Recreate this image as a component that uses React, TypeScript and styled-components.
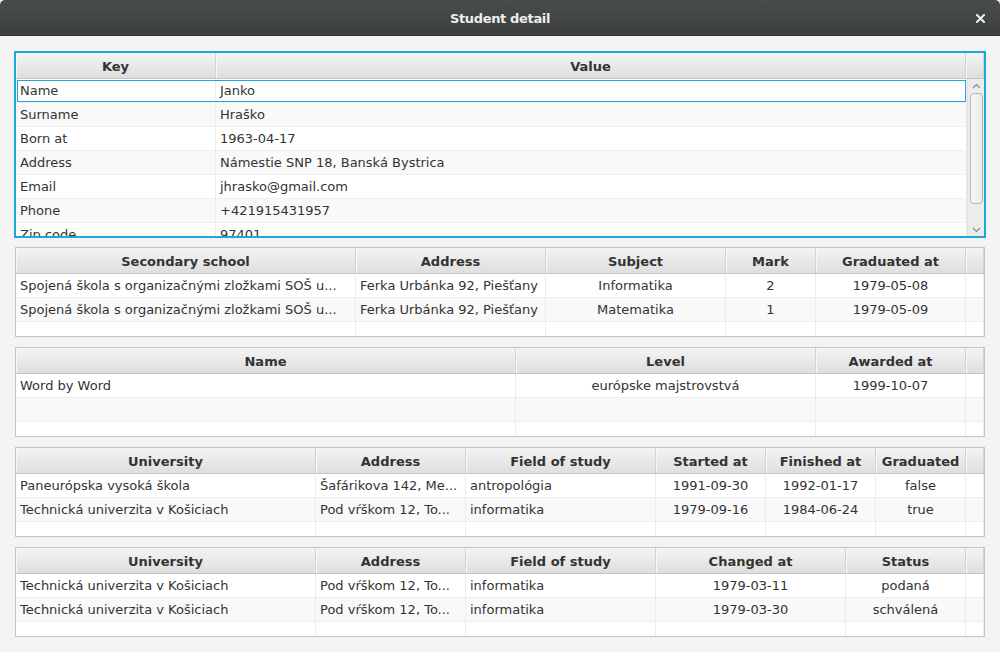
import React from 'react';
import styled, { createGlobalStyle, css } from 'styled-components';

const Global = createGlobalStyle`
  *, *::before, *::after { box-sizing: border-box; }
  html, body { margin: 0; padding: 0; background: #ffffff; }
  body { font-family: "DejaVu Sans", "Liberation Sans", sans-serif; font-size: 13px; color: #333333; }
  #root { width: 1000px; height: 652px; }
`;

const Window = styled.div`
  width: 1000px;
  height: 652px;
  display: flex;
  flex-direction: column;
  overflow: hidden;
  background: #f4f4f4;
`;

const TitleBar = styled.div`
  flex: none;
  height: 36px;
  display: grid;
  grid-template-columns: 1fr auto 1fr;
  align-items: center;
  padding: 1px 14px 0 14px;
  background: linear-gradient(#484d4b, #3b3f3e);
  border-radius: 5px 5px 0 0;
  border-bottom: 1px solid #2e3130;
  color: #eeeeec;
  font-weight: bold;
  font-size: 13px;
`;

const Title = styled.div`
  grid-column: 2;
  letter-spacing: -0.35px;
`;

const CloseButton = styled.div`
  grid-column: 3;
  justify-self: end;
  display: flex;
  align-items: center;
  justify-content: center;
  width: 12px;
  height: 12px;
`;

const Content = styled.div`
  flex: 1;
  display: flex;
  flex-direction: column;
  gap: 10px;
  padding: 16px 15px 15px 15px;
`;

const TableBox = styled.div<{ $focused?: boolean }>`
  flex: none;
  display: flex;
  flex-direction: column;
  height: 90px;
  border: 1px solid #c4c4c4;
  background: #ffffff;
  overflow: hidden;
  ${(p) =>
    p.$focused &&
    css`
      height: 187px;
      margin: -1px;
      border: 2px solid #1fa7d9;
    `}
`;

const HeaderRow = styled.div<{ $cols: string }>`
  flex: none;
  display: grid;
  grid-template-columns: ${(p) => p.$cols};
  height: 26px;
  border-bottom: 1px solid #c6c6c6;
  background: linear-gradient(#f4f4f4, #dedede);
`;

const HeaderCell = styled.div`
  display: flex;
  align-items: center;
  justify-content: center;
  padding-top: 2px;
  font-weight: bold;
  color: #333333;
  white-space: nowrap;
  overflow: hidden;
  border-right: 1px solid #d3d3d3;
  box-shadow: inset 1px 0 0 #f7f7f7;
`;

const Body = styled.div`
  flex: 1;
  display: flex;
  min-height: 0;
`;

const Rows = styled.div`
  flex: 1;
  display: flex;
  flex-direction: column;
  overflow: hidden;
  min-width: 0;
`;

const Row = styled.div<{ $cols: string; $odd?: boolean; $selected?: boolean; $filler?: boolean }>`
  flex: none;
  display: grid;
  grid-template-columns: ${(p) => p.$cols};
  height: 24px;
  background: ${(p) => (p.$odd ? '#f9f9f9' : '#ffffff')};
  border-bottom: 1px solid #efefef;
  ${(p) =>
    p.$filler &&
    css`
      flex: 1;
      border-bottom: none;
    `}
  ${(p) =>
    p.$selected &&
    css`
      outline: 1px solid #1fa7d9;
      outline-offset: -2px;
    `}
`;

const Cell = styled.div<{ $align?: 'left' | 'center' }>`
  display: flex;
  align-items: center;
  justify-content: ${(p) => (p.$align === 'center' ? 'center' : 'flex-start')};
  padding: 0 4px;
  white-space: nowrap;
  overflow: hidden;
  color: #333333;
  border-right: 1px solid #ececec;
`;

const ScrollBar = styled.div`
  flex: none;
  width: 17px;
  display: flex;
  flex-direction: column;
  align-items: center;
  background: #ececec;
  border-left: 1px solid #e2e2e2;
`;

const ArrowButton = styled.div`
  flex: none;
  height: 13px;
  width: 100%;
  display: flex;
  align-items: center;
  justify-content: center;
`;

const Thumb = styled.div`
  flex: none;
  margin-top: 1px;
  width: 13px;
  height: 111px;
  border: 1px solid #b3b3b3;
  border-radius: 4px;
  background: linear-gradient(to right, #f8f8f8, #ebebeb);
`;

const Spacer = styled.div`
  flex: 1;
`;

type Col = { title: string; width: string; align?: 'left' | 'center' };

type TableProps = {
  cols: Col[];
  rows: string[][];
  focused?: boolean;
  scroll?: boolean;
  selected?: number;
};

const Chevron = ({ up }: { up?: boolean }) => (
  <svg width="9" height="6" viewBox="0 0 9 6">
    <path
      d={up ? 'M1 5 L4.5 1.5 L8 5' : 'M1 1 L4.5 4.5 L8 1'}
      fill="none"
      stroke="#8a8a8a"
      strokeWidth="1.1"
    />
  </svg>
);

const Table: React.FC<TableProps> = ({ cols, rows, focused, scroll, selected }) => {
  const headerCols = cols.map((c) => c.width).join(' ') + ' 1fr';
  const bodyCols = scroll
    ? cols.map((c, i) => (i === cols.length - 1 ? '1fr' : c.width)).join(' ')
    : headerCols;
  const cellCount = scroll ? cols.length : cols.length + 1;
  return (
    <TableBox $focused={focused}>
      <HeaderRow $cols={headerCols}>
        {cols.map((c) => (
          <HeaderCell key={c.title}>{c.title}</HeaderCell>
        ))}
        <HeaderCell />
      </HeaderRow>
      <Body>
        <Rows>
          {rows.map((r, i) => (
            <Row key={i} $cols={bodyCols} $odd={i % 2 === 1} $selected={selected === i}>
              {Array.from({ length: cellCount }).map((_, j) => (
                <Cell key={j} $align={cols[j]?.align}>
                  {r[j] ?? ''}
                </Cell>
              ))}
            </Row>
          ))}
          {!scroll && (
            <Row $cols={bodyCols} $odd={rows.length % 2 === 1} $filler>
              {Array.from({ length: cellCount }).map((_, j) => (
                <Cell key={j} />
              ))}
            </Row>
          )}
        </Rows>
        {scroll && (
          <ScrollBar>
            <ArrowButton>
              <Chevron up />
            </ArrowButton>
            <Thumb />
            <Spacer />
            <ArrowButton>
              <Chevron />
            </ArrowButton>
          </ScrollBar>
        )}
      </Body>
    </TableBox>
  );
};

const personCols: Col[] = [
  { title: 'Key', width: '200px' },
  { title: 'Value', width: '750px' },
];
const personRows = [
  ['Name', 'Janko'],
  ['Surname', 'Hraško'],
  ['Born at', '1963-04-17'],
  ['Address', 'Námestie SNP 18, Banská Bystrica'],
  ['Email', 'jhrasko@gmail.com'],
  ['Phone', '+421915431957'],
  ['Zip code', '97401'],
];

const schoolCols: Col[] = [
  { title: 'Secondary school', width: '340px' },
  { title: 'Address', width: '190px' },
  { title: 'Subject', width: '180px', align: 'center' },
  { title: 'Mark', width: '90px', align: 'center' },
  { title: 'Graduated at', width: '150px', align: 'center' },
];
const schoolRows = [
  ['Spojená škola s organizačnými zložkami SOŠ u...', 'Ferka Urbánka 92, Piešťany', 'Informatika', '2', '1979-05-08'],
  ['Spojená škola s organizačnými zložkami SOŠ u...', 'Ferka Urbánka 92, Piešťany', 'Matematika', '1', '1979-05-09'],
];

const awardCols: Col[] = [
  { title: 'Name', width: '500px' },
  { title: 'Level', width: '300px', align: 'center' },
  { title: 'Awarded at', width: '150px', align: 'center' },
];
const awardRows = [['Word by Word', 'európske majstrovstvá', '1999-10-07']];

const uniCols: Col[] = [
  { title: 'University', width: '300px' },
  { title: 'Address', width: '150px' },
  { title: 'Field of study', width: '190px' },
  { title: 'Started at', width: '110px', align: 'center' },
  { title: 'Finished at', width: '110px', align: 'center' },
  { title: 'Graduated', width: '90px', align: 'center' },
];
const uniRows = [
  ['Paneurópska vysoká škola', 'Šafárikova 142, Me...', 'antropológia', '1991-09-30', '1992-01-17', 'false'],
  ['Technická univerzita v Košiciach', 'Pod vŕškom 12, To...', 'informatika', '1979-09-16', '1984-06-24', 'true'],
];

const appCols: Col[] = [
  { title: 'University', width: '300px' },
  { title: 'Address', width: '150px' },
  { title: 'Field of study', width: '190px' },
  { title: 'Changed at', width: '190px', align: 'center' },
  { title: 'Status', width: '120px', align: 'center' },
];
const appRows = [
  ['Technická univerzita v Košiciach', 'Pod vŕškom 12, To...', 'informatika', '1979-03-11', 'podaná'],
  ['Technická univerzita v Košiciach', 'Pod vŕškom 12, To...', 'informatika', '1979-03-30', 'schválená'],
];

export default function App() {
  return (
    <>
      <Global />
      <Window>
        <TitleBar>
          <Title>Student detail</Title>
          <CloseButton>
            <svg width="9" height="9" viewBox="0 0 9 9">
              <path d="M1 1 L8 8 M8 1 L1 8" stroke="#f2f2f2" strokeWidth="2" strokeLinecap="square" />
            </svg>
          </CloseButton>
        </TitleBar>
        <Content>
          <Table cols={personCols} rows={personRows} focused scroll selected={0} />
          <Table cols={schoolCols} rows={schoolRows} />
          <Table cols={awardCols} rows={awardRows.concat([[]])} />
          <Table cols={uniCols} rows={uniRows} />
          <Table cols={appCols} rows={appRows} />
        </Content>
      </Window>
    </>
  );
}
